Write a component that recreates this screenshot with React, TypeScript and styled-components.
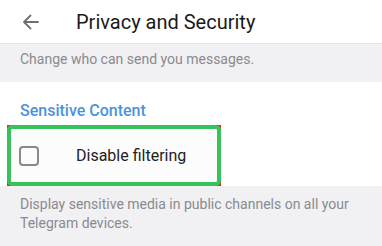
import styled, { createGlobalStyle } from 'styled-components'

const Global = createGlobalStyle`
    body {
        margin: 0;
        background: #ffffff;
        font-family: Roboto, 'Liberation Sans', sans-serif;
    }
`

const Page = styled.div`
    width: 382px;
    height: 246px;
    overflow: hidden;
    display: flex;
    flex-direction: column;
`

const Header = styled.div`
    height: 44px;
    display: flex;
    align-items: center;
    padding-left: 22px;
    gap: 37px;
    border-bottom: 1px solid #e2e2e4;
    box-sizing: border-box;
`

const Title = styled.div`
    font-size: 20px;
    color: #1a1a1a;
`

const Note = styled.div<{ $top: number; $height?: number }>`
    background: #f1f1f3;
    color: #8a8a8e;
    font-size: 14px;
    line-height: 19px;
    box-sizing: border-box;
    padding: ${p => p.$top}px 20px 0 20px;
    ${p => (p.$height ? `height: ${p.$height}px;` : 'flex: 1;')}
`

const Section = styled.div`
    background: #ffffff;
    padding-top: 20px;
    display: flex;
    flex-direction: column;
`

const SectionTitle = styled.div`
    color: #4a93dc;
    font-size: 16px;
    font-weight: 500;
    padding-left: 20px;
    line-height: 18px;
    margin-bottom: 5px;
`

const Highlight = styled.div`
    margin-left: 7px;
    width: 214px;
    height: 61px;
    position: relative;
    background: #ff2020;
`

const Row = styled.label`
    position: absolute;
    inset: 0;
    border: 4px solid #36c45a;
    border-radius: 5px;
    background: #fdfcfd;
    display: flex;
    align-items: center;
    padding-left: 8px;
    gap: 37px;
    font-size: 16px;
    color: #222222;
`

const Box = styled.span`
    width: 20px;
    height: 20px;
    box-sizing: border-box;
    border: 2px solid #8a8a8e;
    border-radius: 4px;
    flex: none;
`

function BackArrow() {
    return (
        <svg width="17" height="16" viewBox="0 0 17 16">
            <path d="M16 8H2M8.5 1.5L2 8l6.5 6.5" fill="none" stroke="#707070" strokeWidth="1.8" strokeLinecap="round" strokeLinejoin="round" />
        </svg>
    )
}

export default function App() {
    return (
        <Page>
            <Global />
            <Header>
                <BackArrow />
                <Title>Privacy and Security</Title>
            </Header>
            <Note $top={6} $height={38}>Change who can send you messages.</Note>
            <Section>
                <SectionTitle>Sensitive Content</SectionTitle>
                <Highlight>
                    <Row>
                        <Box />
                        Disable filtering
                    </Row>
                </Highlight>
            </Section>
            <Note $top={9}>
                Display sensitive media in public channels on all your Telegram devices.
            </Note>
        </Page>
    )
}
